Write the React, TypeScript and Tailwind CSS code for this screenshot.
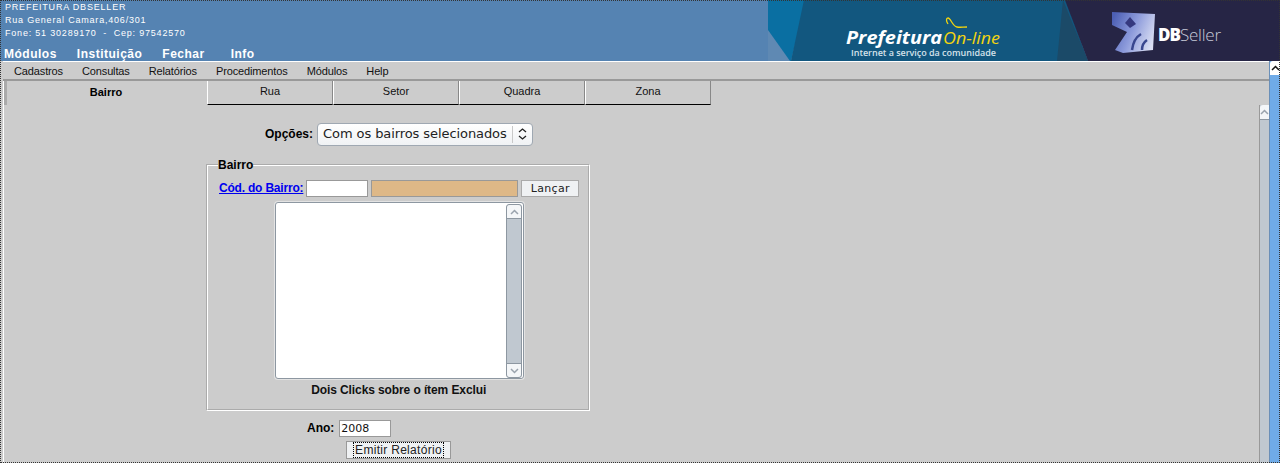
import React from "react";

const modules = [
  { label: "Módulos", extra: "" },
  { label: "Instituição", extra: "" },
  { label: "Fechar", extra: "" },
  { label: "Info", extra: "ml-[6px]" },
];
const menu = ["Cadastros", "Consultas", "Relatórios", "Procedimentos", "Módulos", "Help"];
const tabs = ["Rua", "Setor", "Quadra", "Zona"];

// banner on the right of the header, drawn because it is a picture in the original
const Banner = () => (
  <svg width="512" height="61" viewBox="768 0 512 61" className="block shrink-0">
    <defs>
      <linearGradient id="cube" x1="0" y1="0.2" x2="1" y2="0.6">
        <stop offset="0" stopColor="#4c5fb4" />
        <stop offset="0.5" stopColor="#8d9bdb" />
        <stop offset="1" stopColor="#d9def3" />
      </linearGradient>
    </defs>
    <rect x="768" y="0" width="512" height="61" fill="#5f89b3" />
    <polygon points="768,0 806,0 791,61 790,61 768,30" fill="#0a6fa2" />
    <polygon points="804,0 1066,0 1088,61 791,61" fill="#12577f" />
    <polygon points="1063,0 1088,61 1057,61" fill="#1b4a68" />
    <polygon points="1065,0 1280,0 1280,61 1088,61" fill="#262545" />
    <text x="846" y="44" fill="#fff" fontFamily="'Open Sans', sans-serif" fontWeight="700" fontStyle="italic" fontSize="17" textLength="96" lengthAdjust="spacingAndGlyphs">Prefeitura</text>
    <text x="943" y="44" fill="#f2d40f" fontFamily="'Open Sans', sans-serif" fontStyle="italic" fontSize="17" textLength="57" lengthAdjust="spacingAndGlyphs">On-line</text>
    <path d="M948 24c-2-3-2-6 0-6 3 0 4 8 9 9 3 .6 6 0 10 0" fill="none" stroke="#f2d40f" strokeWidth="1.3" />
    <text x="851" y="55.5" fill="#d5e2ea" fontFamily="'Open Sans', sans-serif" fontWeight="600" fontSize="9" textLength="145">Internet a serviço da comunidade</text>
    <polygon points="1112,12 1155,14 1153,50 1123,53 1115,50 1127,32 1112,25" fill="url(#cube)" />
    <polygon points="1125,23 1130,17 1136,24 1130,28" fill="#35397f" />
    <path d="M1132 50c1-8 4-13 9-16M1142 50c0-5 2-8 5-10" fill="none" stroke="#39478f" strokeWidth="2.5" />
    <text x="1158" y="41" fill="#fff" fontFamily="'Open Sans', sans-serif" fontWeight="800" fontSize="17" letterSpacing="-1">DB</text>
    <text x="1180" y="41" fill="#c6cad8" fontFamily="'Open Sans', sans-serif" fontWeight="300" fontSize="17" textLength="41">Seller</text>
  </svg>
);

const ArrowUp = ({ dark }: { dark?: boolean }) => (
  <svg width="9" height="6" viewBox="0 0 9 6">
    <path d="M1 5l3.5-3.5L8 5" fill="none" stroke={dark ? "#111" : "#9aa3ad"} strokeWidth="1.5" />
  </svg>
);

const ArrowDown = () => (
  <svg width="9" height="6" viewBox="0 0 9 6">
    <path d="M1 1l3.5 3.5L8 1" fill="none" stroke="#9aa3ad" strokeWidth="1.5" />
  </svg>
);

export default function App() {
  return (
    <div className="relative flex h-[463px] w-[1280px] flex-col overflow-hidden bg-[#cccccc] font-['Liberation_Sans',sans-serif] text-black">
      <header className="flex h-[61px] shrink-0 justify-between bg-[#5583b2]">
        <div className="flex flex-col pl-[4px] pt-[1px] text-white">
          <div className="pl-[1px] text-[9px] leading-[13px] tracking-[0.8px]">PREFEITURA DBSELLER</div>
          <div className="pl-[1px] text-[9px] leading-[13px] tracking-[0.8px]">Rua General Camara,406/301</div>
          <div className="pl-[1px] text-[9px] leading-[13px] tracking-[0.8px]">Fone: 51 30289170&nbsp; -&nbsp; Cep: 97542570</div>
          <nav className="mt-[7px] flex gap-[20px] text-[12px] font-bold leading-[14px] tracking-[0.5px]">
            {modules.map((m) => (
              <span key={m.label} className={m.extra}>{m.label}</span>
            ))}
          </nav>
        </div>
        <Banner />
      </header>

      <div className="flex min-h-0 flex-1">
        <div className="flex min-w-0 flex-1 flex-col">
          <div className="ml-[3px] flex h-[20px] shrink-0 items-center gap-[19px] border-b-2 border-t border-b-[#999999] border-t-white pl-[11px] pt-[1px] text-[11px] tracking-[-0.13px] text-[#111111]">
            {menu.map((m) => (
              <span key={m}>{m}</span>
            ))}
          </div>

          <div className="ml-[3px] flex min-h-0 flex-1 flex-col border-l border-white">
            <div className="flex h-[24px] shrink-0 items-stretch">
              <div className="flex w-[203px] items-center justify-center border-l-[3px] border-[#aaaaaa] pb-[1px] pr-[2px] text-[11px] font-bold">
                Bairro
              </div>
              {tabs.map((t) => (
                <div
                  key={t}
                  className="flex w-[126px] items-center justify-center border-b border-l border-b-black border-l-white border-r border-r-[#888888] pb-[3px] text-[11px] text-[#111111]"
                >
                  {t}
                </div>
              ))}
            </div>

            <div className="flex min-h-0 flex-1">
              <main className="min-w-0 flex-1 pl-[203px]">
                <div className="flex h-[46px] items-center pl-[58px] pt-[12px]">
                  <label className="mr-[4px] text-[12px] font-bold">Opções:</label>
                  <div className="flex h-[23px] w-[216px] items-center rounded-[4px] border border-[#9fa8b2] bg-gradient-to-b from-white to-[#f0f2f4] pl-[5px] font-['DejaVu_Sans',sans-serif] text-[13px] tracking-[-0.08px] text-[#222222]">
                    <span className="flex-1 whitespace-nowrap">Com os bairros selecionados</span>
                    <span className="flex h-[17px] w-[20px] flex-col items-center justify-center gap-[2px] border-l border-[#c9c9c9]">
                      <svg width="9" height="5" viewBox="0 0 9 5"><path d="M1 4l3.5-3L8 4" fill="none" stroke="#222" strokeWidth="1.3" /></svg>
                      <svg width="9" height="5" viewBox="0 0 9 5"><path d="M1 1l3.5 3L8 1" fill="none" stroke="#222" strokeWidth="1.3" /></svg>
                    </span>
                  </div>
                </div>

                <fieldset className="-ml-[1px] mt-[7px] h-[253px] w-[384px] border-2 border-white pl-[10px] pr-[9px] [border-style:groove]">
                  <legend className="text-[12px] font-bold leading-[14px]">Bairro</legend>
                  <div className="mt-[6px] flex h-[20px] items-center">
                    <a href="#" className="mr-[3px] whitespace-nowrap pl-[1px] text-[12px] font-bold tracking-[-0.2px] text-[#0000ee] underline">Cód. do Bairro:</a>
                    <input className="mr-[3px] h-[17px] w-[62px] border border-[#999999] bg-white" readOnly />
                    <input className="mr-[3px] h-[17px] w-[147px] border border-[#999999] bg-[#deb887]" readOnly />
                    <button className="h-[17px] w-[58px] border border-[#aaaaaa] bg-[#eff1f3] font-['DejaVu_Sans',sans-serif] text-[11px] leading-[15px] tracking-[0.3px] text-[#222222]">
                      Lançar
                    </button>
                  </div>
                  <div className="ml-[57px] mt-[4px] flex h-[177px] w-[249px] justify-end rounded-[3px] border border-[#8d97a1] bg-white pr-[1px] pt-[1px] shadow-[0_0_0_1px_#e3e3e3]">
                    <div className="flex h-[174px] w-[16px] flex-col rounded-[3px] border border-[#8d97a1] bg-[#c0c8d0]">
                      <span className="flex h-[14px] items-center justify-center rounded-t-[3px] border-b border-[#8d97a1] bg-[#f4f6f8]"><ArrowUp /></span>
                      <span className="flex-1" />
                      <span className="flex h-[14px] items-center justify-center rounded-b-[3px] border-t border-[#8d97a1] bg-[#f4f6f8]"><ArrowDown /></span>
                    </div>
                  </div>
                  <p className="mt-[4px] text-center text-[12px] font-bold leading-[14px] tracking-[-0.1px] text-[#111111]">Dois Clicks sobre o ítem Exclui</p>
                </fieldset>

                <div className="mt-[8px] flex h-[18px] items-center pl-[100px]">
                  <label className="mr-[5px] text-[12px] font-bold">Ano:</label>
                  <input className="h-[17px] w-[52px] border border-[#999999] bg-white pl-[1px] font-['DejaVu_Sans',sans-serif] text-[11px] text-[#111111]" defaultValue="2008" />
                </div>
                <div className="mt-[4px] pl-[139px]">
                  <button className="flex h-[18px] w-[105px] items-center justify-center border border-[#999999] bg-[#eff1f3] text-[12px] tracking-[0.3px] text-[#222222]">
                    <span className="border border-dotted border-black px-[1px] leading-[14px]">Emitir Relatório</span>
                  </button>
                </div>
              </main>

              <div className="flex w-[10px] shrink-0 flex-col border-l border-[#999999] bg-[#c0c8d0]">
                <span className="flex h-[15px] items-center justify-center rounded-tl-[3px] border-b border-[#8d97a1] bg-[#f4f6f8]"><ArrowUp /></span>
              </div>
            </div>
          </div>
        </div>

        <div className="flex w-[11px] shrink-0 flex-col border-l border-[#6a8fb8] bg-[#6fabe8]">
          <span className="flex h-[14px] items-center justify-center rounded-tl-[3px] bg-white"><ArrowUp dark /></span>
        </div>
      </div>

      {/* window frame of the capture */}
      <div className="pointer-events-none absolute inset-0 border border-dotted border-[#333333]" />
    </div>
  );
}
